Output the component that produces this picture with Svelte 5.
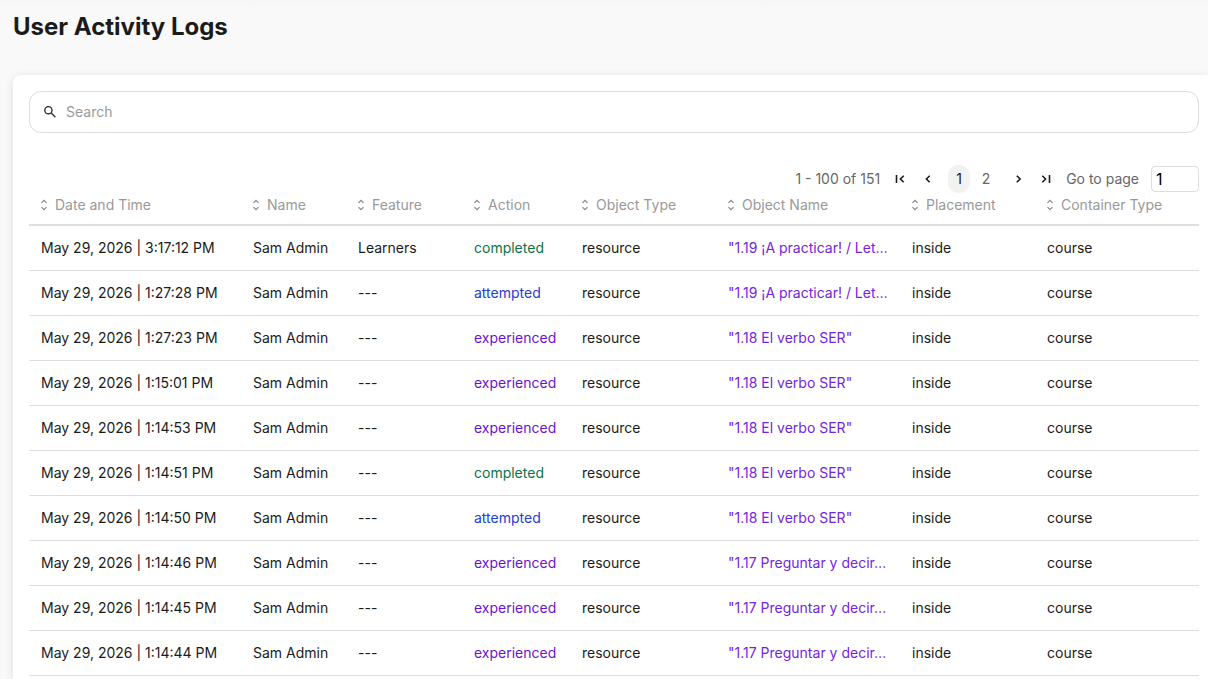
<script>
  const columns = [
    { label: 'Date and Time', width: 212 },
    { label: 'Name', width: 105 },
    { label: 'Feature', width: 116 },
    { label: 'Action', width: 108 },
    { label: 'Object Type', width: 146 },
    { label: 'Object Name', width: 184 },
    { label: 'Placement', width: 135 },
    { label: 'Container Type', width: 164 }
  ];

  const practice = '"1.19 ¡A practicar! / Let…';
  const ser = '"1.18 El verbo SER"';
  const ask = '"1.17 Preguntar y decir…';

  const rows = [
    { time: '3:17:12 PM', feature: 'Learners', action: 'completed', object: practice },
    { time: '1:27:28 PM', feature: '---', action: 'attempted', object: practice },
    { time: '1:27:23 PM', feature: '---', action: 'experienced', object: ser },
    { time: '1:15:01 PM', feature: '---', action: 'experienced', object: ser },
    { time: '1:14:53 PM', feature: '---', action: 'experienced', object: ser },
    { time: '1:14:51 PM', feature: '---', action: 'completed', object: ser },
    { time: '1:14:50 PM', feature: '---', action: 'attempted', object: ser },
    { time: '1:14:46 PM', feature: '---', action: 'experienced', object: ask },
    { time: '1:14:45 PM', feature: '---', action: 'experienced', object: ask },
    { time: '1:14:44 PM', feature: '---', action: 'experienced', object: ask }
  ];

  let query = $state('');
  let page = $state(1);
</script>

<main>
  <h1>User Activity Logs</h1>
  <section class="card">
    <label class="search">
      <svg width="12" height="12" viewBox="0 0 12 12" fill="none" stroke="currentColor" stroke-width="1.4">
        <circle cx="4.4" cy="4.2" r="3.6" />
        <path d="M7 6.8l4.4 4.4" />
      </svg>
      <input type="search" placeholder="Search" aria-label="Search" bind:value={query} />
    </label>

    <nav class="pager" aria-label="Pagination">
      <span class="range">1 - 100 of 151</span>
      <button class="arrow" aria-label="First page" onclick={() => (page = 1)}>
        <svg width="10" height="10" viewBox="0 0 10 10"><path d="M1.5 1v8M8.7 1.7L5.4 5l3.3 3.3" /></svg>
      </button>
      <button class="arrow" aria-label="Previous page" onclick={() => (page = 1)}>
        <svg width="10" height="10" viewBox="0 0 10 10"><path d="M6.7 1.7L3.4 5l3.3 3.3" /></svg>
      </button>
      <div class="pages">
        <button class="page" class:current={page === 1} onclick={() => (page = 1)}>1</button>
        <button class="page" class:current={page === 2} onclick={() => (page = 2)}>2</button>
      </div>
      <button class="arrow" aria-label="Next page" onclick={() => (page = 2)}>
        <svg width="10" height="10" viewBox="0 0 10 10"><path d="M3.8 1.7L7.1 5 3.8 8.3" /></svg>
      </button>
      <button class="arrow" aria-label="Last page" onclick={() => (page = 2)}>
        <svg width="10" height="10" viewBox="0 0 10 10"><path d="M8.5 1v8M1.3 1.7L4.6 5 1.3 8.3" /></svg>
      </button>
      <label class="goto" for="goto">Go to page</label>
      <input id="goto" class="number" type="text" inputmode="numeric" bind:value={page} />
    </nav>

    <table>
      <colgroup>
        {#each columns as column}
          <col style="width: {column.width}px" />
        {/each}
      </colgroup>
      <thead>
        <tr>
          {#each columns as column}
            <th scope="col">
              <button class="sort">
                <svg width="6" height="12" viewBox="0 0 6 12"><path d="M.5 3.8L3 1.3l2.5 2.5M.5 8.2L3 10.7l2.5-2.5" /></svg>
                {column.label}
              </button>
            </th>
          {/each}
        </tr>
      </thead>
      <tbody>
        {#each rows as row}
          <tr>
            <td>May 29, 2026 | {row.time}</td>
            <td>Sam Admin</td>
            <td>{row.feature}</td>
            <td class={row.action}>{row.action}</td>
            <td>resource</td>
            <td class="object">{row.object}</td>
            <td>inside</td>
            <td>course</td>
          </tr>
        {/each}
      </tbody>
    </table>
  </section>
</main>

<style>
  :global(body) {
    margin: 0;
    background: #f9f9f9;
  }

  main {
    box-sizing: border-box;
    min-height: 100vh;
    display: flex;
    flex-direction: column;
    gap: 32px;
    padding: 11px 0 0 13px;
    overflow: hidden;
    font-family: Inter, sans-serif;
    font-size: 14px;
    line-height: 20px;
    color: #1b1b1b;
    background: linear-gradient(#f6f6f6, #f9f9f9 8px);
  }

  h1 {
    margin: 0;
    font-size: 24px;
    line-height: 32px;
    font-weight: 700;
  }

  .card {
    flex: 1;
    padding: 16px 9px 0 16px;
    border-radius: 8px 0 0 0;
    background: #fff;
    box-shadow: 0 2px 8px rgba(0, 0, 0, 0.12);
  }

  button,
  input {
    font: inherit;
    color: inherit;
    border: 0;
    padding: 0;
    background: none;
  }

  button {
    cursor: pointer;
  }

  .search {
    display: flex;
    align-items: center;
    gap: 10px;
    height: 40px;
    padding: 0 14px;
    border: 1px solid #dedede;
    border-radius: 12px;
    color: #333;
  }

  .search input {
    flex: 1;
    min-width: 0;
    outline: none;
    appearance: none;
  }

  .search input::placeholder {
    color: #999;
  }

  .pager {
    display: flex;
    justify-content: flex-end;
    align-items: center;
    margin-top: 32px;
    color: #666;
  }

  .arrow {
    width: 28px;
    height: 28px;
    display: grid;
    place-items: center;
    color: #1b1b1b;
  }

  .arrow svg {
    fill: none;
    stroke: currentColor;
    stroke-width: 1.6;
  }

  .range {
    margin-right: 6px;
  }

  .pages {
    display: flex;
    gap: 5px;
    margin: 0 7px 0 6px;
  }

  .page {
    width: 22px;
    height: 28px;
    border-radius: 11px;
  }

  .page.current {
    color: #1b1b1b;
    background: #f2f2f2;
  }

  .goto {
    margin: 0 12px 0 6px;
  }

  .number {
    box-sizing: border-box;
    width: 48px;
    height: 26px;
    padding: 0 4px;
    border: 1px solid #dedede;
    border-radius: 4px;
    font-size: 16px;
    color: #000;
  }

  table {
    width: 100%;
    table-layout: fixed;
    border-collapse: separate;
    border-spacing: 0;
  }

  th {
    height: 31px;
    padding: 0 12px;
    border-bottom: 2px solid #dedede;
    vertical-align: top;
    text-align: left;
    font-weight: 400;
    color: #999;
  }

  .sort {
    display: flex;
    align-items: center;
    gap: 8px;
    padding-top: 2px;
    white-space: nowrap;
  }

  .sort svg {
    fill: none;
    stroke: #888;
    stroke-width: 1.2;
  }

  td {
    height: 44px;
    padding: 0 12px;
    border-bottom: 1px solid #dedede;
    overflow: hidden;
    text-overflow: ellipsis;
    white-space: nowrap;
  }

  .completed {
    color: #08734b;
  }

  .attempted {
    color: #2340cf;
  }

  .experienced {
    color: #6b13d1;
  }

  .object {
    color: #7424e0;
  }
</style>
